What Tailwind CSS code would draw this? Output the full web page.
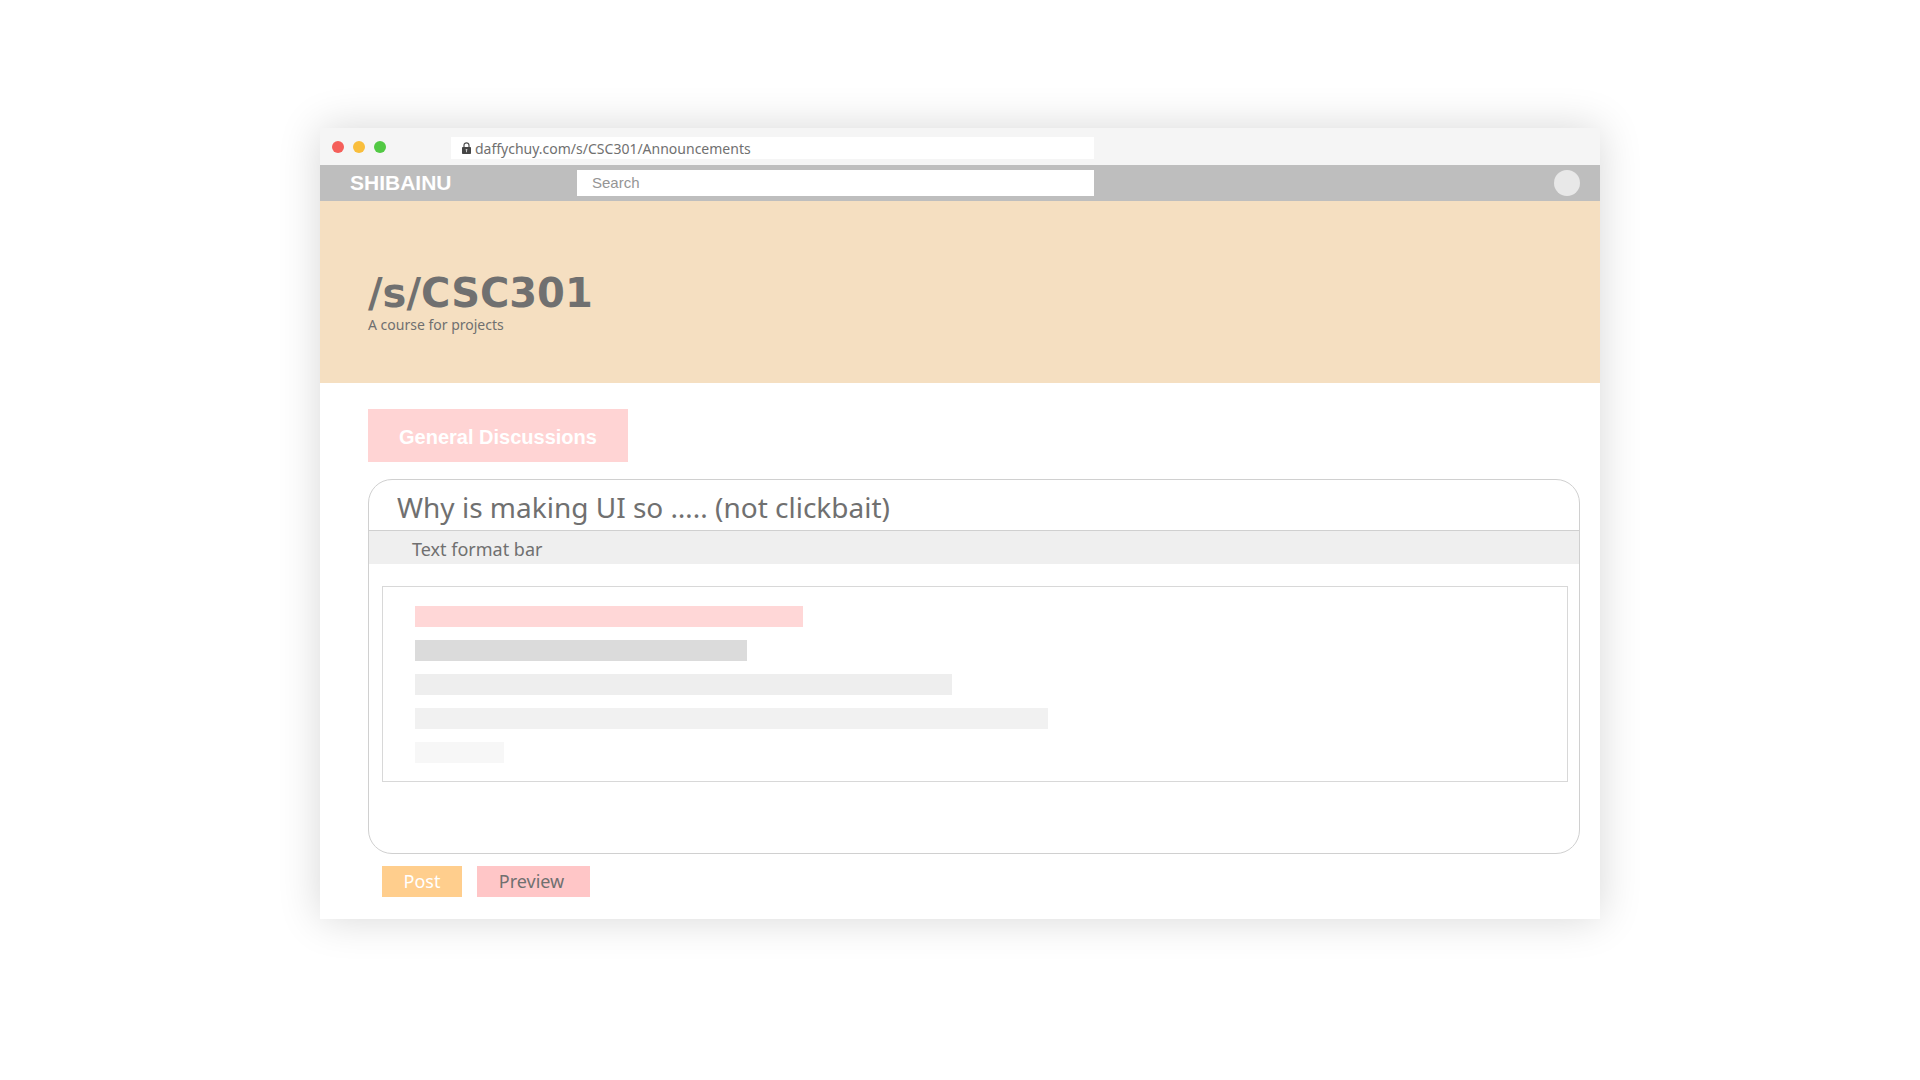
<!DOCTYPE html>
<html lang="en">
<head>
<meta charset="utf-8">
<title>/s/CSC301</title>
<script src="https://cdn.jsdelivr.net/npm/@tailwindcss/browser@4"></script>
</head>
<body class="min-h-screen bg-white pt-32 pb-40 font-['Noto_Sans',sans-serif] text-[#707070]">
  <div class="mx-auto w-2/3 bg-white shadow-[0_0_40px_rgba(0,0,0,0.16)]">
    <!-- Browser bar -->
    <div class="flex h-[37px] items-center bg-[#f5f5f5] pl-3">
      <div class="flex gap-[9px]">
        <span class="size-3 rounded-full bg-[#f55f5a]"></span>
        <span class="size-3 rounded-full bg-[#f9be3c]"></span>
        <span class="size-3 rounded-full bg-[#52c944]"></span>
      </div>
      <label class="ml-[65px] mt-[3px] flex h-[22px] w-[643px] items-center bg-white pl-[11px]">
        <svg class="h-3 w-[9px] shrink-0" viewBox="0 0 9 12" aria-hidden="true">
          <path d="M2 5.500V3.300a2.500 2.500 0 0 1 5 0V5.500" fill="none" stroke="#505050" stroke-width="1.2"/>
          <rect y="5" width="9" height="7" rx="0.8" fill="#454545"/>
          <path d="M3.700 7h1.600v1.300l-.3.300v1.700h-1V8.600l-.3-.3z" fill="#c8c8c8"/>
        </svg>
        <input type="text" aria-label="Address" value="daffychuy.com/s/CSC301/Announcements" class="ml-1 h-[22px] min-w-0 flex-1 bg-transparent text-[14px] outline-none">
      </label>
    </div>
    <!-- Site bar -->
    <header class="flex h-9 items-center bg-[#bebebe] pr-5 pl-[30px] font-['Liberation_Sans',sans-serif]">
      <a href="#" class="w-[227px] text-[21px] font-bold text-white">SHIBAINU</a>
      <input type="search" aria-label="Search" placeholder="Search" class="h-[26px] w-[517px] bg-white px-[15px] pb-0.5 text-[15px] outline-none placeholder:text-[#959595]">
      <button aria-label="Account" class="ml-auto size-[26px] rounded-full bg-[#e8e8e8]"></button>
    </header>
    <!-- Course banner -->
    <section class="h-[182px] bg-[#f5dfc1] px-12 pt-[69px]">
      <h1 class="font-['DejaVu_Sans',sans-serif] text-[40px] leading-[47px] font-bold">/s/CSC301</h1>
      <p class="text-[14px] leading-4">A course for projects</p>
    </section>
    <main class="pt-[26px] pr-5 pb-[22px] pl-12">
      <button class="h-[53px] w-[260px] bg-[#ffd4d4] pt-0.5 font-['Liberation_Sans',sans-serif] text-[20px] font-bold text-white">General Discussions</button>
      <form class="mt-[17px]">
        <div class="h-[375px] rounded-3xl border border-[#d0d0d0]">
          <input type="text" aria-label="Title" value="Why is making UI so ….. (not clickbait)" class="block h-[50px] w-full bg-transparent px-7 pt-1 text-[28px] outline-none">
          <div class="h-[34px] border-t border-[#d0d0d0] bg-[#efefef] pl-[43px] text-[18px] leading-[37px]">Text format bar</div>
          <div class="mt-[22px] mr-[11px] ml-[13px] flex h-[196px] flex-col gap-[13px] border border-[#d8d8d8] pt-[19px] pl-8">
            <div class="h-[21px] w-[388px] bg-[#ffd7d7]"></div>
            <div class="h-[21px] w-[332px] bg-[#dbdbdb]"></div>
            <div class="h-[21px] w-[537px] bg-[#eeeeee]"></div>
            <div class="h-[21px] w-[633px] bg-[#f1f1f1]"></div>
            <div class="h-[21px] w-[89px] bg-[#f7f7f7]"></div>
          </div>
        </div>
        <div class="mt-3 ml-[14px] flex gap-[15px] text-[18px] leading-[31px]">
          <button type="submit" class="h-[31px] w-20 bg-[#ffce8d] text-white">Post</button>
          <button type="button" class="h-[31px] w-[113px] bg-[#ffc6c7] pr-1">Preview</button>
        </div>
      </form>
    </main>
  </div>
</body>
</html>
